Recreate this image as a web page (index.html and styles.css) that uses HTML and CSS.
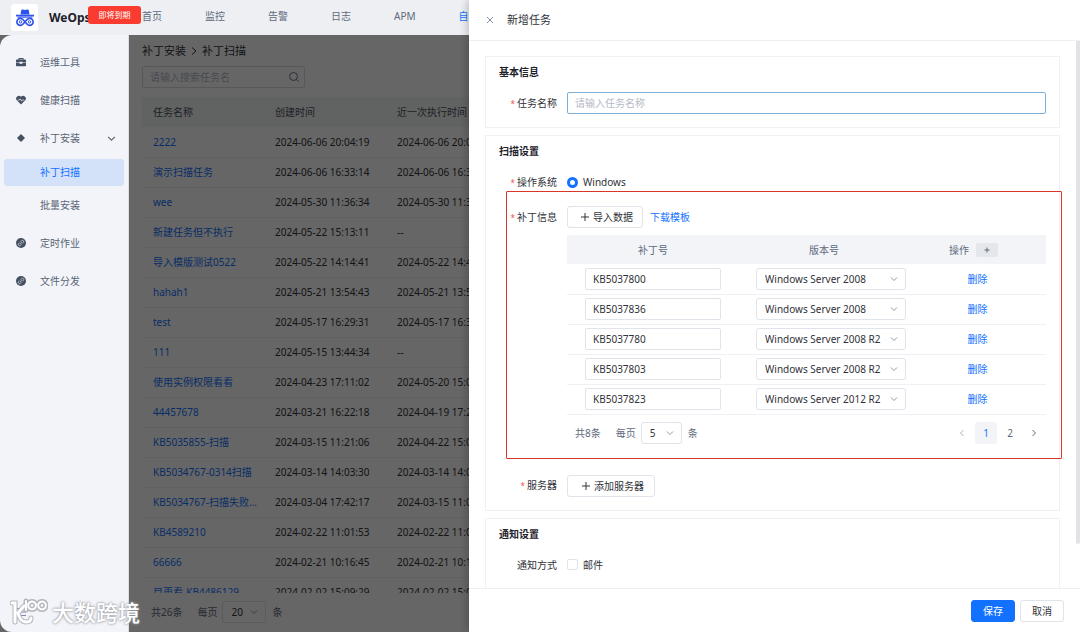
FILE: index.html
```html
<!DOCTYPE html>
<html lang="zh-CN">
<head>
    <meta charset="UTF-8">
    <meta name="viewport" content="width=device-width, initial-scale=1.0">
    <title>WeOps - 补丁扫描</title>
    <link rel="stylesheet" href="styles.css">
</head>
<body>
    <header class="topbar">
        <span class="logo">
            <svg viewBox="0 0 20 20" width="20" height="20" fill="none" stroke="#2f54eb">
                <path d="M5.5 6.5 6.3 1.8 8 1.4 10 2.1 12 1.4 13.7 1.8 14.5 6.5z" fill="#2f54eb" stroke="none"/>
                <path d="M1 7.6h18" stroke-width="1.8"/>
                <path d="M2.6 9.2h14.8" stroke-width="1"/>
                <path d="M10 13.700C8.500 11.700 7.200 10.400 5.400 10.400a3.500 3.500 0 0 0 0 7c1.800 0 3.100-1.700 4.600-3.700s2.800-3.300 4.600-3.300a3.500 3.500 0 0 1 0 7c-1.800 0-3.100-1.700-4.600-3.700z" stroke-width="1.700"/>
                <circle cx="5.500" cy="13.900" r="1.200"/>
                <circle cx="14.500" cy="13.900" r="1.200"/>
            </svg>
        </span>
        <strong class="brand">WeOps</strong>
        <span class="badge">即将到期</span>
        <nav class="topnav">
            <a href="#">首页</a>
            <a href="#">监控</a>
            <a href="#">告警</a>
            <a href="#">日志</a>
            <a href="#">APM</a>
            <a href="#" class="active">自动化</a>
        </nav>
    </header>

    <div class="layout">
        <aside class="sidebar">
            <a href="#" class="menu-item">
                <svg class="menu-icon" viewBox="0 0 10 10"><path d="M2.500 2.500V1h5v1.500H9a1 1 0 0 1 1 1v2H6.500v-.8h-3v.8H0v-2a1 1 0 0 1 1-1zM3.500 2.500h3V2h-3zM0 6h3.500v.8h3V6H10v2.500a.8.8 0 0 1-.8.8H.8A.8.8 0 0 1 0 8.500z" fill="#465063"/></svg>
                运维工具
            </a>
            <a href="#" class="menu-item">
                <svg class="menu-icon" viewBox="0 0 10 10"><path d="M5 9.500.8 5.300A2.700 2.700 0 0 1 5 1.800a2.700 2.700 0 0 1 4.200 3.500z" fill="#465063"/><path d="M1.500 5h1.800l.9-1.200L5.500 6.200 6.300 5h2" fill="none" stroke="#f3f4f9" stroke-width=".7"/></svg>
                健康扫描
            </a>
            <a href="#" class="menu-item">
                <svg class="menu-icon" viewBox="0 0 10 10"><path d="M5 1 9 5 5 9 1 5z" fill="#465063"/></svg>
                补丁安装
                <svg class="menu-arrow" viewBox="0 0 8 8"><path d="M1 2.500l3 3 3-3"/></svg>
            </a>
            <div class="submenu">
                <a href="#" class="active">补丁扫描</a>
                <a href="#">批量安装</a>
            </div>
            <a href="#" class="menu-item">
                <svg class="menu-icon" viewBox="0 0 10 10"><circle cx="5" cy="5" r="5" fill="#465063"/><path d="M4.300 5.700 5.700 4.300M4.600 3.700l1-1a1.200 1.200 0 0 1 1.700 1.700l-1 1M5.400 6.300l-1 1a1.200 1.200 0 0 1-1.700-1.700l1-1" fill="none" stroke="#f3f4f9" stroke-width=".7"/></svg>
                定时作业
            </a>
            <a href="#" class="menu-item">
                <svg class="menu-icon" viewBox="0 0 10 10"><circle cx="5" cy="5" r="5" fill="#465063"/><path d="M4.300 5.700 5.700 4.300M4.600 3.700l1-1a1.200 1.200 0 0 1 1.700 1.700l-1 1M5.400 6.300l-1 1a1.200 1.200 0 0 1-1.700-1.700l1-1" fill="none" stroke="#f3f4f9" stroke-width=".7"/></svg>
                文件分发
            </a>
            <button class="collapse" aria-label="收起菜单">
                <svg viewBox="0 0 10 10" width="10" height="10"><path d="M0 1.500h10M4 5h6M0 8.500h10M2.500 3.500 0.800 5l1.700 1.500" fill="none" stroke="#7d89a3"/></svg>
            </button>
        </aside>

        <main class="main">
            <div class="breadcrumb">
                <a href="#">补丁安装</a>
                <svg viewBox="0 0 8 8" width="8" height="8"><path d="M2 0.500l4 3.500-4 3.500"/></svg>
                <span>补丁扫描</span>
            </div>
            <div class="search">
                <input type="text" placeholder="请输入搜索任务名" aria-label="搜索任务名">
                <svg viewBox="0 0 10 10" width="10" height="10"><circle cx="4.500" cy="4.500" r="4"/><path d="M7.500 7.500l2 2"/></svg>
            </div>
            <div class="task-list">
                <table class="task-table">
                    <thead>
                        <tr><th>任务名称</th><th>创建时间</th><th>近一次执行时间</th></tr>
                    </thead>
                    <tbody>
                        <tr><td><a href="#">2222</a></td><td>2024-06-06 20:04:19</td><td>2024-06-06 20:04:20</td></tr>
                        <tr><td><a href="#">演示扫描任务</a></td><td>2024-06-06 16:33:14</td><td>2024-06-06 16:33:15</td></tr>
                        <tr><td><a href="#">wee</a></td><td>2024-05-30 11:36:34</td><td>2024-05-30 11:36:35</td></tr>
                        <tr><td><a href="#">新建任务但不执行</a></td><td>2024-05-22 15:13:11</td><td>--</td></tr>
                        <tr><td><a href="#">导入模版测试0522</a></td><td>2024-05-22 14:14:41</td><td>2024-05-22 14:43:10</td></tr>
                        <tr><td><a href="#">hahah1</a></td><td>2024-05-21 13:54:43</td><td>2024-05-21 13:54:44</td></tr>
                        <tr><td><a href="#">test</a></td><td>2024-05-17 16:29:31</td><td>2024-05-17 16:30:02</td></tr>
                        <tr><td><a href="#">111</a></td><td>2024-05-15 13:44:34</td><td>--</td></tr>
                        <tr><td><a href="#">使用实例权限看看</a></td><td>2024-04-23 17:11:02</td><td>2024-05-20 15:02:11</td></tr>
                        <tr><td><a href="#">44457678</a></td><td>2024-03-21 16:22:18</td><td>2024-04-19 17:20:31</td></tr>
                        <tr><td><a href="#">KB5035855-扫描</a></td><td>2024-03-15 11:21:06</td><td>2024-04-22 15:01:40</td></tr>
                        <tr><td><a href="#">KB5034767-0314扫描</a></td><td>2024-03-14 14:03:30</td><td>2024-03-14 14:03:31</td></tr>
                        <tr><td><a href="#">KB5034767-扫描失败...</a></td><td>2024-03-04 17:42:17</td><td>2024-03-15 11:00:26</td></tr>
                        <tr><td><a href="#">KB4589210</a></td><td>2024-02-22 11:01:53</td><td>2024-02-22 11:01:54</td></tr>
                        <tr><td><a href="#">66666</a></td><td>2024-02-21 10:16:45</td><td>2024-02-21 10:16:46</td></tr>
                        <tr><td><a href="#">目更看-KB4486129</a></td><td>2024-02-02 15:09:29</td><td>2024-02-02 15:09:30</td></tr>
                    </tbody>
                </table>
            </div>
            <div class="pagination list-footer">
                <span class="total">共26条</span>
                <label for="listSize">每页</label>
                <span class="select-box">
                    <select id="listSize"><option>20</option><option>50</option></select>
                    <svg viewBox="0 0 8 8"><path d="M1 2.500l3 3 3-3"/></svg>
                </span>
                <span>条</span>
            </div>
        </main>
    </div>

    <section class="drawer">
        <div class="drawer-header">
            <button class="close" aria-label="关闭">
                <svg viewBox="0 0 8 8" width="8" height="8"><path d="M1 1l6 6M7 1l-6 6"/></svg>
            </button>
            <h1>新增任务</h1>
        </div>

        <form class="drawer-body">
            <div class="card">
                <h2>基本信息</h2>
                <div class="field">
                    <label class="label required" for="taskName">任务名称</label>
                    <input type="text" id="taskName" class="text-input focused" placeholder="请输入任务名称">
                </div>
            </div>

            <div class="card">
                <h2>扫描设置</h2>
                <div class="field">
                    <span class="label required">操作系统</span>
                    <input type="radio" id="windows" name="os" checked>
                    <label class="option" for="windows">Windows</label>
                </div>
                <div class="field patch-field">
                    <span class="label required">补丁信息</span>
                    <div class="patch">
                        <div class="patch-actions">
                            <button type="button" class="btn"><svg viewBox="0 0 8 8" width="8" height="8"><path d="M4 0v8M0 4h8"/></svg>导入数据</button>
                            <a href="#">下载模板</a>
                        </div>
                        <table class="patch-table">
                            <thead>
                                <tr><th>补丁号</th><th>版本号</th><th>操作<button type="button" class="add-row" aria-label="添加一行"><svg viewBox="0 0 8 8" width="8" height="8"><path d="M4 1.500v5M1.500 4h5"/></svg></button></th></tr>
                            </thead>
                            <tbody>
                                <tr>
                                    <td><input type="text" class="text-input" value="KB5037800" aria-label="补丁号"></td>
                                    <td><span class="select-box"><select aria-label="版本号"><option>Windows Server 2008</option></select><svg viewBox="0 0 8 8"><path d="M1 2.500l3 3 3-3"/></svg></span></td>
                                    <td><a href="#">删除</a></td>
                                </tr>
                                <tr>
                                    <td><input type="text" class="text-input" value="KB5037836" aria-label="补丁号"></td>
                                    <td><span class="select-box"><select aria-label="版本号"><option>Windows Server 2008</option></select><svg viewBox="0 0 8 8"><path d="M1 2.500l3 3 3-3"/></svg></span></td>
                                    <td><a href="#">删除</a></td>
                                </tr>
                                <tr>
                                    <td><input type="text" class="text-input" value="KB5037780" aria-label="补丁号"></td>
                                    <td><span class="select-box"><select aria-label="版本号"><option>Windows Server 2008 R2</option></select><svg viewBox="0 0 8 8"><path d="M1 2.500l3 3 3-3"/></svg></span></td>
                                    <td><a href="#">删除</a></td>
                                </tr>
                                <tr>
                                    <td><input type="text" class="text-input" value="KB5037803" aria-label="补丁号"></td>
                                    <td><span class="select-box"><select aria-label="版本号"><option>Windows Server 2008 R2</option></select><svg viewBox="0 0 8 8"><path d="M1 2.500l3 3 3-3"/></svg></span></td>
                                    <td><a href="#">删除</a></td>
                                </tr>
                                <tr>
                                    <td><input type="text" class="text-input" value="KB5037823" aria-label="补丁号"></td>
                                    <td><span class="select-box"><select aria-label="版本号"><option>Windows Server 2012 R2</option></select><svg viewBox="0 0 8 8"><path d="M1 2.500l3 3 3-3"/></svg></span></td>
                                    <td><a href="#">删除</a></td>
                                </tr>
                            </tbody>
                        </table>
                        <div class="pagination">
                            <span class="total">共8条</span>
                            <label for="patchSize">每页</label>
                            <span class="select-box">
                                <select id="patchSize"><option>5</option><option>10</option></select>
                                <svg viewBox="0 0 8 8"><path d="M1 2.500l3 3 3-3"/></svg>
                            </span>
                            <span>条</span>
                            <div class="pages">
                                <button type="button" class="disabled" aria-label="上一页"><svg viewBox="0 0 8 8" width="8" height="8"><path d="M5.500 1l-3 3 3 3"/></svg></button>
                                <button type="button" class="current">1</button>
                                <button type="button">2</button>
                                <button type="button" aria-label="下一页"><svg viewBox="0 0 8 8" width="8" height="8"><path d="M2.500 1l3 3-3 3"/></svg></button>
                            </div>
                        </div>
                    </div>
                </div>
                <div class="field">
                    <span class="label required">服务器</span>
                    <button type="button" class="btn btn-wide"><svg viewBox="0 0 8 8" width="8" height="8"><path d="M4 0v8M0 4h8"/></svg>添加服务器</button>
                </div>
            </div>

            <div class="card">
                <h2>通知设置</h2>
                <div class="field">
                    <span class="label">通知方式</span>
                    <input type="checkbox" id="mail">
                    <label class="option" for="mail">邮件</label>
                </div>
            </div>
            <div class="scroll-thumb"></div>
        </form>

        <div class="drawer-footer">
            <button class="btn btn-primary">保存</button>
            <button class="btn">取消</button>
        </div>
    </section>

    <div class="watermark">
        <svg viewBox="0 0 38 28" width="38" height="28" fill="none" stroke-linecap="round">
            <g stroke="#b4b7be" stroke-width="5">
                <path d="M2 5h3v19M14 8 8 15c1 5 4 9 8 9 3 0 5-1 5-4"/>
                <path d="M16 3v9M22 3.500a4 4 0 1 0 .1 0M32 3.500a4 4 0 1 0 .1 0"/>
            </g>
            <g stroke="#fff" stroke-width="3">
                <path d="M2 5h3v19M14 8 8 15c1 5 4 9 8 9 3 0 5-1 5-4"/>
                <path d="M16 3v9M22 3.500a4 4 0 1 0 .1 0M32 3.500a4 4 0 1 0 .1 0" stroke-width="2"/>
            </g>
        </svg>
        <span>大数跨境</span>
    </div>
</body>
</html>
```
FILE: styles.css
```css
* {
    box-sizing: border-box;
}
body {
    margin: 0;
    height: 100vh;
    display: flex;
    flex-direction: column;
    position: relative;
    overflow: hidden;
    background: #666;
    color: #313238;
    font-family: "Noto Sans", "Noto Sans CJK SC", sans-serif;
    font-size: 10px;
    line-height: 16px;
}
a {
    color: #1272ff;
    text-decoration: none;
}
button, input, select {
    font: inherit;
    color: inherit;
    margin: 0;
}
button {
    padding: 0;
    border: 0;
    background: none;
}
svg {
    flex: none;
}
h1, h2 {
    margin: 0;
}

/* top bar */
.topbar {
    display: flex;
    align-items: center;
    flex: none;
    height: 35px;
    padding-left: 11px;
    background: #eeeff3;
}
.logo {
    display: flex;
    align-items: center;
    justify-content: center;
    width: 27px;
    height: 27px;
    border-radius: 3px;
    background: #fff;
}
.brand {
    width: 39px;
    margin-left: 11px;
    font-size: 12px;
    color: #1d2129;
}
.badge {
    width: 53px;
    height: 18px;
    margin-bottom: 5px;
    border-radius: 3px;
    background: #f93c2f;
    color: #fff;
    font-size: 8px;
    line-height: 18px;
    text-align: center;
}
.topnav {
    display: flex;
    gap: 43px;
    margin: 0 0 3px 1px;
}
.topnav a {
    color: #5f6a7d;
    white-space: nowrap;
}
.topnav a.active {
    color: #1272ff;
}

/* sidebar */
.layout {
    display: flex;
    flex: 1;
    min-height: 0;
}
.sidebar {
    display: flex;
    flex-direction: column;
    flex: none;
    width: 129px;
    padding: 8px 4px 15px;
    border-radius: 12px 0 0 12px;
    border-right: 1px solid #dcdee5;
    background: #f3f4f9;
}
.menu-item {
    display: flex;
    align-items: center;
    height: 38px;
    padding: 0 8px 0 12px;
    color: #5a6475;
}
.menu-icon {
    width: 10px;
    height: 10px;
    margin-right: 14px;
}
.menu-arrow {
    width: 9px;
    height: 9px;
    margin-left: auto;
    fill: none;
    stroke: #5a6475;
}
.submenu {
    display: flex;
    flex-direction: column;
    gap: 6px;
    padding: 2px 0 5px;
}
.submenu a {
    height: 27px;
    padding-left: 36px;
    border-radius: 3px;
    line-height: 27px;
    color: #5a6475;
}
.submenu .active {
    background: #d3e1f9;
    color: #1272ff;
}
.collapse {
    display: flex;
    margin: auto 0 0 12px;
}

/* task list, dimmed while the drawer is open */
.main {
    display: flex;
    flex-direction: column;
    flex: 1;
    min-width: 0;
    position: relative;
    padding: 8px 13px;
    background: #fff;
}
.main::after {
    content: "";
    position: absolute;
    inset: 0;
    background: rgba(0, 0, 0, 0.6);
}
.breadcrumb {
    display: flex;
    align-items: center;
    gap: 4px;
    font-size: 11px;
}
.breadcrumb a {
    color: inherit;
}
.breadcrumb svg {
    fill: none;
    stroke: #313238;
}
.search {
    display: flex;
    align-items: center;
    width: 163px;
    height: 22px;
    margin: 7px 0 9px;
    padding: 0 5px 0 7px;
    border: 1px solid #d8dbe2;
    border-radius: 2px;
}
.search input {
    flex: 1;
    min-width: 0;
    padding: 0;
    border: 0;
    background: none;
}
.search svg {
    fill: none;
    stroke: #6b7485;
}
input::placeholder {
    color: #b4bac6;
    opacity: 1;
}
.task-list {
    flex: 1;
    min-height: 0;
    overflow: hidden;
}
table {
    width: 100%;
    border-collapse: collapse;
    table-layout: fixed;
}
.task-table th {
    height: 30px;
    background: #f3f4f6;
    color: #4c5361;
}
.task-table th:first-child, .task-table th:nth-child(2) {
    width: 122px;
}
.task-table th, .task-table td {
    padding: 0 0 0 11px;
    font-weight: 400;
    text-align: left;
    white-space: nowrap;
}
.task-table td {
    height: 30px;
    border-bottom: 1px solid #f0f1f5;
}
.pagination {
    display: flex;
    align-items: center;
    color: #5f6a7d;
}
.pagination .total {
    margin-right: 15px;
}
.pagination .select-box {
    width: 41px;
    margin: 0 6px 0 5px;
}
.list-footer {
    padding: 8px 8px 1px 9px;
}
.list-footer .select-box {
    width: 44px;
}

/* form controls */
.text-input {
    flex: 1;
    width: 100%;
    height: 22px;
    padding: 0 7px;
    border: 1px solid #dfe3ea;
    border-radius: 2px;
    background: #fff;
    outline: none;
}
.text-input.focused {
    border-color: #7cb0dc;
}
.select-box {
    display: flex;
    align-items: center;
    position: relative;
}
.select-box select {
    width: 100%;
    height: 22px;
    padding: 0 8px;
    border: 1px solid #dfe3ea;
    border-radius: 3px;
    background: none;
    color: #313238;
    appearance: none;
}
.select-box svg {
    position: absolute;
    right: 8px;
    width: 8px;
    height: 8px;
    fill: none;
    stroke: #8d97aa;
    pointer-events: none;
}
.btn {
    display: inline-flex;
    align-items: center;
    justify-content: center;
    gap: 4px;
    min-width: 44px;
    height: 22px;
    border: 1px solid #dfe3ea;
    border-radius: 3px;
    background: #fff;
}
.btn svg {
    stroke: #313238;
}
.btn-primary {
    border-color: #1272ff;
    background: #1272ff;
    color: #fff;
}

/* drawer */
.drawer {
    display: flex;
    flex-direction: column;
    position: absolute;
    top: 0;
    right: 0;
    bottom: 0;
    left: 469px;
    background: #fff;
    box-shadow: -2px 0 8px rgba(0, 0, 0, 0.2);
}
.drawer-header {
    display: flex;
    align-items: center;
    gap: 13px;
    flex: none;
    height: 41px;
    padding-left: 17px;
    border-bottom: 1px solid #eceff3;
}
.drawer-header h1 {
    font-size: 11px;
    font-weight: 400;
}
.close {
    display: flex;
}
.close svg {
    stroke: #7d8ba5;
}
.drawer-body {
    flex: 1;
    min-height: 0;
    position: relative;
    overflow: hidden;
    padding: 15px 20px 0 16px;
}
.scroll-thumb {
    position: absolute;
    top: 0;
    right: 0;
    width: 4px;
    height: 92%;
    border-radius: 0 0 2px 2px;
    background: #e1e3e9;
}
.card {
    margin-bottom: 7px;
    padding: 7px 13px 13px;
    border: 1px solid #eff1f4;
}
.card h2 {
    margin-bottom: 12px;
    font-size: 10px;
    line-height: 16px;
    color: #1d2129;
}
.field {
    display: flex;
    align-items: center;
    min-height: 22px;
}
.label {
    flex: none;
    width: 58px;
    margin-right: 10px;
    text-align: right;
}
.required::before {
    content: "*";
    margin-right: 2px;
    color: #f0524f;
    font-size: 8px;
}
.option {
    margin-left: 5px;
}
input[type="radio"], input[type="checkbox"] {
    width: 11px;
    height: 11px;
    appearance: none;
    border: 1px solid #dfe3ea;
    border-radius: 2px;
}
input[type="radio"]:checked {
    border: 3px solid #1272ff;
    border-radius: 50%;
}

/* patch list */
.patch-field {
    align-items: flex-start;
    position: relative;
    margin: 13px 0 31px;
}
.patch-field::after {
    content: "";
    position: absolute;
    inset: -15px -16px -15px 7px;
    border: 1px solid #d9362b;
    border-radius: 1px;
    pointer-events: none;
}
.patch-field > .label {
    line-height: 22px;
}
.patch {
    flex: 1;
    min-width: 0;
}
.patch-actions {
    display: flex;
    align-items: center;
    gap: 7px;
    margin-bottom: 7px;
}
.patch-actions .btn {
    width: 76px;
    padding-left: 4px;
}
.btn-wide {
    width: 88px;
    padding-left: 4px;
}
.patch-table th {
    height: 29px;
    padding: 0;
    background: #f3f4f8;
    color: #5f6a7d;
    font-weight: 400;
}
.patch-table th:first-child {
    width: 172px;
}
.patch-table th:nth-child(2) {
    width: 170px;
}
.patch-table th:last-child {
    padding-right: 8px;
}
.patch-table td {
    height: 30px;
    padding: 0 18px;
    border-bottom: 1px solid #eef0f4;
    text-align: center;
}
.patch-table td:nth-child(2) {
    padding: 0 3px 0 17px;
}
.patch-table .text-input {
    display: block;
}
.add-row {
    width: 22px;
    height: 14px;
    margin-left: 7px;
    border-radius: 2px;
    background: #e4e7ec;
    line-height: 10px;
}
.add-row svg {
    stroke: #5f6a7d;
}
.patch .pagination {
    padding: 7px 1px 0 8px;
}
.pages {
    display: flex;
    gap: 2px;
    margin-left: auto;
}
.pages button {
    width: 22px;
    height: 22px;
    border-radius: 3px;
}
.pages svg {
    fill: none;
    stroke: #5f6a7d;
}
.pages .disabled svg {
    stroke: #a9b1c0;
}
.pages .current {
    background: #f3f4f8;
    color: #1272ff;
}
.drawer-footer {
    display: flex;
    align-items: center;
    justify-content: flex-end;
    gap: 5px;
    flex: none;
    height: 44px;
    padding: 0 16px;
    border-top: 1px solid #eceff3;
}

.watermark {
    display: flex;
    align-items: center;
    gap: 4px;
    position: absolute;
    left: 10px;
    bottom: 6px;
    color: #fff;
    font-size: 22px;
    font-weight: 500;
    line-height: 28px;
    text-shadow: 0 0 2px #9a9ea6, 0 0 3px #9a9ea6;
}
```
